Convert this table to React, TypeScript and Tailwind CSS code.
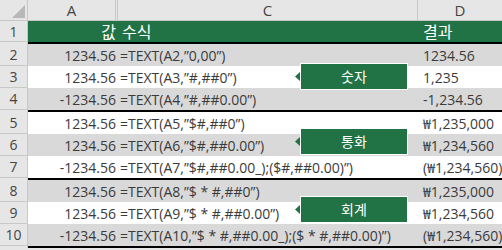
const FONT = "font-['Segoe_UI','Open_Sans','Noto_Sans_CJK_KR',sans-serif]";

type Row = { n: number; v: string; f: string; r: string };

const groups: Row[][] = [
  [
    { n: 2, v: '1234.56', f: '=TEXT(A2,”0,00”)', r: '1234.56' },
    { n: 3, v: '1234.56', f: '=TEXT(A3,”#,##0”)', r: '1,235' },
    { n: 4, v: '-1234.56', f: '=TEXT(A4,”#,##0.00”)', r: '-1,234.56' },
  ],
  [
    { n: 5, v: '1234.56', f: '=TEXT(A5,”$#,##0”)', r: '₩1,235,000' },
    { n: 6, v: '1234.56', f: '=TEXT(A6,”$#,##0.00”)', r: '₩1,234,560' },
    { n: 7, v: '-1234.56', f: '=TEXT(A7,”$#,##0.00_);($#,##0.00)”)', r: '(₩1,234,560)' },
  ],
  [
    { n: 8, v: '1234.56', f: '=TEXT(A8,”$ * #,##0”)', r: '₩1,235,000' },
    { n: 9, v: '1234.56', f: '=TEXT(A9,”$ * #,##0.00”)', r: '₩1,234,560' },
    { n: 10, v: '-1234.56', f: '=TEXT(A10,”$ * #,##0.00_);($ * #,##0.00)”)', r: '(₩1,234,560)' },
  ],
];

function RowHead({ children, h }: { children?: React.ReactNode; h: string }) {
  return (
    <div className={`w-[28px] shrink-0 ${h} bg-[#e6e6e6] border-r border-b border-[#c8c8c8] flex items-center justify-center text-[14px] text-[#444]`}>
      {children}
    </div>
  );
}

function DataRow({ row }: { row: Row }) {
  const bg = row.n % 2 === 0 ? 'bg-[#d9d9d9]' : 'bg-white';
  return (
    <div className="flex h-[22px]">
      <RowHead h="h-[22px]">{row.n}</RowHead>
      <div className={`flex flex-1 items-center text-[14px] text-[#3b3b3b] ${bg}`}>
        <span className="w-[88px] shrink-0 text-right whitespace-nowrap">{row.v}</span>
        <span className="w-[302px] shrink-0 pl-[4px] whitespace-nowrap">{row.f}</span>
        <span className="flex-1 pl-[5px] whitespace-nowrap">{row.r}</span>
      </div>
    </div>
  );
}

function Divider() {
  return (
    <div className="flex h-[2px]">
      <div className="w-[28px] shrink-0 bg-[#e6e6e6] border-r border-[#c8c8c8]" />
      <div className="flex-1 bg-black" />
    </div>
  );
}

function Callout({ label, top }: { label: string; top: string }) {
  return (
    <div className={`absolute left-[295px] ${top} flex items-center`}>
      <svg width="6" height="11" viewBox="0 0 6 11" className="-mr-[1px]">
        <polygon points="6,0 0,5.5 6,11" fill="#217346" />
      </svg>
      <div className="w-[108px] h-[27px] bg-[#217346] border border-white flex items-center justify-center text-white text-[14px]">
        {label}
      </div>
    </div>
  );
}

export default function App() {
  return (
    <div className={`relative w-[502px] h-[250px] overflow-hidden bg-[#e6e6e6] ${FONT}`}>
      <div className="flex h-[21px] bg-[#e6e6e6] border-b border-[#c8c8c8] text-[15px] text-[#444]">
        <div className="w-[28px] shrink-0 border-r border-[#c8c8c8] relative">
          <svg width="13" height="13" className="absolute right-[2px] bottom-[2px]">
            <polygon points="13,0 13,13 0,13" fill="#b8b8b8" />
          </svg>
        </div>
        <div className="w-[88px] shrink-0 border-r border-[#c8c8c8] flex items-center justify-center">A</div>
        <div className="w-[1px] shrink-0" />
        <div className="w-[301px] shrink-0 border-x border-[#c8c8c8] flex items-center justify-center">C</div>
        <div className="flex-1 flex items-center justify-center">D</div>
      </div>
      <div className="flex h-[21px]">
        <RowHead h="h-[21px]">1</RowHead>
        <div className="flex flex-1 items-center bg-[#217346] text-white text-[16px]">
          <span className="w-[88px] shrink-0 text-right">값</span>
          <span className="w-[302px] shrink-0 pl-[6px]">수식</span>
          <span className="flex-1 pl-[5px]">결과</span>
        </div>
      </div>
      <Divider />
      {groups.map((g, i) => (
        <div key={i}>
          {g.map((r) => (
            <DataRow key={r.n} row={r} />
          ))}
          <Divider />
        </div>
      ))}
      <Callout label="숫자" top="top-[63px]" />
      <Callout label="통화" top="top-[128px]" />
      <Callout label="회계" top="top-[196px]" />
    </div>
  );
}
